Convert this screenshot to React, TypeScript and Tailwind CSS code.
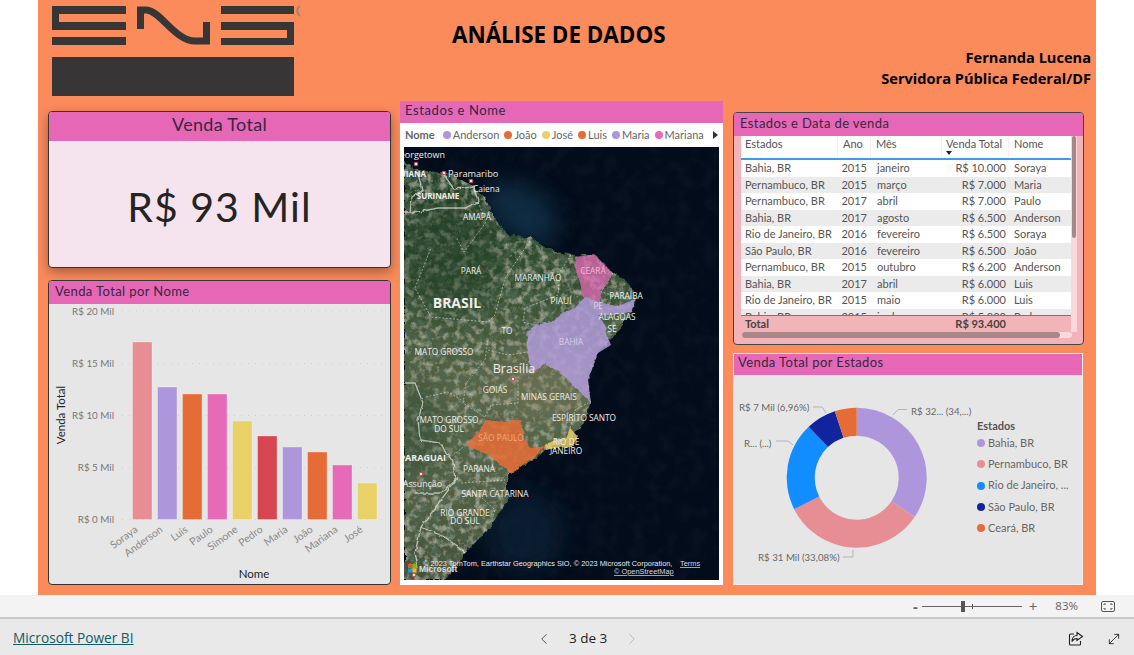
import { ChevronLeft, ChevronRight, MoveDiagonal } from "lucide-react";

const din = "[font-family:Lato,'Noto_Sans',sans-serif]";

const barData = [
  { name: "Soraya", top: 342, color: "#E78E95" },
  { name: "Anderson", top: 387, color: "#AE96DC" },
  { name: "Luis", top: 394, color: "#E66C37" },
  { name: "Paulo", top: 394, color: "#E66AB8" },
  { name: "Simone", top: 421, color: "#E9D168" },
  { name: "Pedro", top: 436, color: "#D64550" },
  { name: "Maria", top: 447, color: "#AE96DC" },
  { name: "João", top: 452, color: "#E66C37" },
  { name: "Mariana", top: 465, color: "#E66AB8" },
  { name: "José", top: 483, color: "#E9D168" },
];

const axisTicks = [
  { label: "R$ 20 Mil", y: 311 },
  { label: "R$ 15 Mil", y: 363.5 },
  { label: "R$ 10 Mil", y: 415.5 },
  { label: "R$ 5 Mil", y: 467.5 },
  { label: "R$ 0 Mil", y: 519.5 },
];

const tableRows = [
  ["Bahia, BR", "2015", "janeiro", "R$ 10.000", "Soraya"],
  ["Pernambuco, BR", "2015", "março", "R$ 7.000", "Maria"],
  ["Pernambuco, BR", "2017", "abril", "R$ 7.000", "Paulo"],
  ["Bahia, BR", "2017", "agosto", "R$ 6.500", "Anderson"],
  ["Rio de Janeiro, BR", "2016", "fevereiro", "R$ 6.500", "Soraya"],
  ["São Paulo, BR", "2016", "fevereiro", "R$ 6.500", "João"],
  ["Pernambuco, BR", "2015", "outubro", "R$ 6.200", "Anderson"],
  ["Bahia, BR", "2017", "abril", "R$ 6.000", "Luis"],
  ["Rio de Janeiro, BR", "2015", "maio", "R$ 6.000", "Luis"],
  ["Bahia, BR", "2015", "junho", "R$ 5.000", "Pedro"],
];

const slices = [
  { name: "Bahia, BR", pct: 34.5, color: "#AE96DC" },
  { name: "Pernambuco, BR", pct: 33.08, color: "#E78E95" },
  { name: "Rio de Janeiro, ...", pct: 20.4, color: "#118DFF" },
  { name: "São Paulo, BR", pct: 6.96, color: "#12239E" },
  { name: "Ceará, BR", pct: 5.06, color: "#E66C37" },
];

const mapLegend = [
  { name: "Anderson", color: "#AE96DC" },
  { name: "João", color: "#E66C37" },
  { name: "José", color: "#E9D168" },
  { name: "Luis", color: "#E66C37" },
  { name: "Maria", color: "#AE96DC" },
  { name: "Mariana", color: "#E66AB8" },
];

// label, x, y, size, anchor, weight
const mapLabels: [string, number, number, number, string?, number?][] = [
  ["Georgetown", 41, 11, 9, "end"],
  ["GUIANA", 22, 30, 8, "end", 700],
  ["Paramaribo", 44, 30, 9.2, "start"],
  ["Caiena", 69, 45, 8.4, "start"],
  ["SURINAME", 34, 52, 8, "middle", 700],
  ["AMAPÁ", 73, 73, 8.3],
  ["PARÁ", 67, 127, 8.3],
  ["MARANHÃO", 134, 134, 8.3],
  ["PIAUÍ", 157, 157, 8.3],
  ["BRASIL", 53, 161, 14, "middle", 700],
  ["TO", 103, 187, 8.3],
  ["PARAÍBA", 222, 152, 8.3],
  ["ALAGOAS", 213, 173, 8.3],
  ["SE", 208, 185, 8.3],
  ["MATO GROSSO", 40, 208, 8.3],
  ["Brasília", 110, 226, 12.5],
  ["GOIÁS", 91, 246, 8.3],
  ["MINAS GERAIS", 145, 253, 8.3],
  ["MATO GROSSO", 45, 276, 8.3],
  ["DO SUL", 45, 285, 8.3],
  ["ESPÍRITO SANTO", 180, 274, 8.3],
  ["RIO DE", 162, 298, 8.3],
  ["JANEIRO", 162, 307, 8.3],
  ["PARAGUAI", 42, 314, 9, "end", 700],
  ["PARANÁ", 75, 325, 8.3],
  ["Assunção", 38, 340, 8.8, "end"],
  ["SANTA CATARINA", 91, 350, 8.3],
  ["RIO GRANDE", 61, 369, 8.3],
  ["DO SUL", 61, 377, 8.3],
];

const tintedLabels: [string, number, number, string][] = [
  ["CEARÁ", 189, 127, "#f3b6d8"],
  ["PE", 194, 162, "#ddd0f0"],
  ["BAHIA", 167, 198, "#d9cfee"],
  ["SÃO PAULO", 97, 294, "#f3a57f"],
];

const stateLines = [
  "126,94 101,131 91,168 84,175 27,170 11,141 27,101",
  "167,108 156,125 154,148 121,161 119,175 131,178",
  "84,193 81,213 62,236 59,256 81,270",
  "84,203 104,208 124,205",
  "114,233 114,256 87,258 81,270",
  "22,250 44,245 61,255",
  "52,306 62,298",
  "57,336 101,333",
  "57,346 77,350 91,363 89,370",
  "166,281 171,263 184,256",
  "74,55 82,75 60,105 52,90",
  "209,126 197,145 215,150",
];

const borderLines = [
  "0,65 14,65 34,61 61,61 74,55",
  "0,236 11,236 19,256 14,273 16,293 36,296 49,315 51,333 37,346 11,346",
  "54,330 17,380 11,406 14,420",
  "17,380 41,390 61,406",
  "14,26 18,44 8,50 6,65",
  "40,28 50,42 70,40 74,55",
];

const pins = [
  [12, 17],
  [40, 26],
  [67, 34],
  [109, 232],
  [17, 327],
  [10, 428],
];

const landPoints =
  "0,13 14,23 44,26 66,38 81,51 91,71 104,88 127,91 151,105 171,108 191,108 209,126 227,138 232,151 227,168 211,188 206,193 194,206 184,233 186,256 181,276 167,290 141,303 134,310 107,326 102,340 104,353 84,383 61,406 47,426 40,433 0,433";

function arcPath(start: number, end: number) {
  const cx = 856.7;
  const cy = 477.7;
  const ro = 70;
  const ri = 42;
  const pt = (r: number, a: number) => {
    const t = (a / 100) * Math.PI * 2;
    return `${(cx + r * Math.sin(t)).toFixed(2)} ${(cy - r * Math.cos(t)).toFixed(2)}`;
  };
  const large = end - start > 50 ? 1 : 0;
  return `M${pt(ro, start)} A${ro} ${ro} 0 ${large} 1 ${pt(ro, end)} L${pt(ri, end)} A${ri} ${ri} 0 ${large} 0 ${pt(ri, start)} Z`;
}

function Logo() {
  return (
    <svg width="252" height="92" viewBox="52 5 252 92" className="shrink-0">
      <g fill="#373535">
        <path d="M52 6h74v8H59v8h67v8H52z" />
        <rect x="52" y="37" width="74" height="8" />
        <path d="M221 6h73v8h-73zM221 22h73v23h-73v-7h66v-8h-66z" />
        <rect x="52" y="57" width="242" height="39" />
      </g>
      <path
        d="M140.5 29V10H146C160 10 175 41 195 41H206.5V22"
        fill="none"
        stroke="#373535"
        strokeWidth="7"
      />
      <path d="M300 6a6 6 0 0 0 0 10" fill="none" stroke="#a88070" strokeWidth="2" />
    </svg>
  );
}

function BarChart() {
  return (
    <svg width="341" height="280" viewBox="49 304 341 280" className="block">
      {axisTicks.map((t) => (
        <g key={t.label}>
          <line x1="122" x2="388" y1={t.y} y2={t.y} stroke="#cfcfcf" strokeDasharray="1 6" />
          <text x="114" y={t.y + 3.5} textAnchor="end" fontSize="9.8" fill="#777">
            {t.label}
          </text>
        </g>
      ))}
      {barData.map((b, i) => {
        const x = 132.5 + i * 25;
        return (
          <g key={b.name}>
            <rect x={x} y={b.top} width="19.5" height={519.5 - b.top} fill={b.color} />
            <rect x={x} y={b.top} width="19.5" height={519.5 - b.top} fill="none" stroke="#fff" strokeOpacity="0.3" />
            <text
              x={x + 6}
              y={531}
              textAnchor="end"
              fontSize="10.5"
              fill="#8a8a8a"
              transform={`rotate(-36 ${x + 6} 531)`}
            >
              {b.name}
            </text>
          </g>
        );
      })}
      <text x="65" y="415" textAnchor="middle" fontSize="11.5" fill="#252423" transform="rotate(-90 65 415)">
        Venda Total
      </text>
      <text x="254" y="578" textAnchor="middle" fontSize="11.5" fill="#252423">
        Nome
      </text>
    </svg>
  );
}

function MapView() {
  return (
    <svg width="316" height="433" viewBox="0 0 316 433" className="block">
      <defs>
        <filter id="terrain" x="-2%" y="-2%" width="104%" height="104%">
          <feTurbulence type="fractalNoise" baseFrequency="0.13" numOctaves="3" seed="11" result="edge" />
          <feDisplacementMap in="SourceGraphic" in2="edge" scale="6" xChannelSelector="R" yChannelSelector="G" result="shape" />
          <feTurbulence type="fractalNoise" baseFrequency="0.14" numOctaves="4" seed="7" result="n" />
          <feColorMatrix
            in="n"
            type="matrix"
            values="0 0 0 0 0.08  0 0 0 0 0.14  0 0 0 0 0.09  2.6 0 0 0 -1.05"
            result="dark"
          />
          <feColorMatrix
            in="n"
            type="matrix"
            values="0 0 0 0 0.58  0 0 0 0 0.6  0 0 0 0 0.46  0 1.5 0 0 -0.72"
            result="light"
          />
          <feMerge result="m">
            <feMergeNode in="shape" />
            <feMergeNode in="dark" />
            <feMergeNode in="light" />
          </feMerge>
          <feComposite in="m" in2="shape" operator="in" />
        </filter>
        <filter id="rough" x="-5%" y="-5%" width="110%" height="110%">
          <feTurbulence type="fractalNoise" baseFrequency="0.18" numOctaves="2" seed="4" />
          <feDisplacementMap in="SourceGraphic" scale="3.5" xChannelSelector="R" yChannelSelector="G" />
        </filter>
        <filter id="soft" x="-40%" y="-40%" width="180%" height="180%">
          <feGaussianBlur stdDeviation="11" />
        </filter>
        <filter id="waves" x="0" y="0" width="100%" height="100%">
          <feTurbulence type="fractalNoise" baseFrequency="0.07" numOctaves="3" seed="3" />
          <feColorMatrix type="matrix" values="0 0 0 0 0.08  0 0 0 0 0.18  0 0 0 0 0.26  0.9 0 0 0 -0.38" />
        </filter>
        <linearGradient id="land" x1="0" y1="0" x2="0" y2="1">
          <stop offset="0" stopColor="#22402a" />
          <stop offset="0.3" stopColor="#35502f" />
          <stop offset="0.55" stopColor="#5c6645" />
          <stop offset="0.8" stopColor="#525f42" />
          <stop offset="1" stopColor="#434f38" />
        </linearGradient>
        <clipPath id="landClip">
          <polygon points={landPoints} />
        </clipPath>
      </defs>
      <rect width="316" height="433" fill="#030c1a" />
      <rect width="316" height="433" filter="url(#waves)" opacity="0.18" />
      <ellipse cx="118" cy="66" rx="40" ry="26" fill="#15405c" filter="url(#soft)" opacity="0.6" transform="rotate(35 118 66)" />
      <ellipse cx="120" cy="385" rx="40" ry="40" fill="#10283c" filter="url(#soft)" opacity="0.6" />
      <polygon points={landPoints} fill="url(#land)" filter="url(#terrain)" />
      <g clipPath="url(#landClip)">
        <ellipse cx="45" cy="110" rx="50" ry="60" fill="#1b3a24" filter="url(#soft)" opacity="0.5" />
        <ellipse cx="15" cy="280" rx="25" ry="50" fill="#2b4a30" filter="url(#soft)" opacity="0.5" />
        <ellipse cx="140" cy="235" rx="50" ry="40" fill="#807d60" filter="url(#soft)" opacity="0.35" />
      </g>
      <g fill="none" stroke="#e8e8e0" strokeOpacity="0.7" filter="url(#rough)">
        {borderLines.map((p) => (
          <polyline key={p} points={p} strokeWidth="1.3" />
        ))}
      </g>
      <g fill="none" stroke="#f2f2ea" strokeOpacity="0.65" strokeDasharray="2 1.6">
        {stateLines.map((p) => (
          <polyline key={p} points={p} strokeWidth="0.8" />
        ))}
      </g>
      <g filter="url(#rough)">
        <polygon
          points="171,110 191,108 209,126 197,145 196,155 179,150 176,135 172,125"
          fill="#E66AB8"
          fillOpacity="0.72"
        />
        <polygon
          points="181,150 196,155 211,160 232,152 227,165 207,168 194,168 201,178 202,186 207,198 194,206 184,233 187,256 174,243 161,230 141,216 127,226 124,206 124,193 122,188 131,178 147,175 161,165 171,161"
          fill="#B39CDE"
          fillOpacity="0.82"
        />
        <polygon
          points="62,298 74,286 82,273 101,275 116,273 121,293 127,301 142,299 131,310 107,326 97,318 84,308"
          fill="#E66C37"
          fillOpacity="0.85"
        />
        <polygon
          points="141,298 151,293 162,291 166,281 174,290 167,300 151,301 142,303"
          fill="#E9D168"
          fillOpacity="0.85"
        />
      </g>
      {pins.map(([x, y]) => (
        <circle key={`${x}-${y}`} cx={x} cy={y} r="1.8" fill="#f4e6e6" stroke="#c9485b" strokeWidth="1.1" />
      ))}
      <g fill="#eeeeea" className="[font-family:'Open_Sans',sans-serif]">
        {mapLabels.map(([text, x, y, size, anchor, weight]) => (
          <text
            key={`${text}-${y}`}
            x={x}
            y={y}
            fontSize={size}
            textAnchor={anchor ?? "middle"}
            fontWeight={weight ?? 500}
          >
            {text}
          </text>
        ))}
        {tintedLabels.map(([text, x, y, color]) => (
          <text key={text} x={x} y={y} fontSize="8.3" textAnchor="middle" fill={color}>
            {text}
          </text>
        ))}
      </g>
      <g className="[font-family:'Liberation_Sans',sans-serif]" fontSize="7.4" fill="#e4e8ee">
        <text x="19" y="419">© 2023 TomTom, Earthstar Geographics SIO, © 2023 Microsoft Corporation,</text>
        <text x="276" y="419" textDecoration="underline" fill="#cfd6f0">Terms</text>
        <text x="210" y="427" textDecoration="underline" fill="#cfd6f0">© OpenStreetMap</text>
        <text x="15" y="425" fontSize="8.5" fontWeight="700" fill="#dcdcdc">Microsoft</text>
      </g>
      <g>
        <rect x="4" y="417" width="4" height="4" fill="#f25022" />
        <rect x="8.5" y="417" width="4" height="4" fill="#7fba00" />
        <rect x="4" y="421.5" width="4" height="4" fill="#00a4ef" />
        <rect x="8.5" y="421.5" width="4" height="4" fill="#ffb900" />
      </g>
    </svg>
  );
}

function DonutChart() {
  let acc = 0;
  return (
    <svg width="240" height="208" viewBox="734 375 240 208" className="block shrink-0">
      {slices.map((s) => {
        const d = arcPath(acc, acc + s.pct);
        acc += s.pct;
        return <path key={s.name} d={d} fill={s.color} />;
      })}
      <g fill="none" stroke="#b3b3b3">
        <polyline points="813,407 822,407 826,413" />
        <polyline points="776,441 788,441 793,445" />
        <polyline points="893,415 898,409.5 907,409.5" />
        <polyline points="843,557 853,557 853,550" />
      </g>
      <g fontSize="9.7" fill="#666">
        <text x="739" y="411">R$ 7 Mil (6,96%)</text>
        <text x="744" y="447">R... (...)</text>
        <text x="911" y="415">R$ 32... (34,...)</text>
        <text x="758" y="561">R$ 31 Mil (33,08%)</text>
      </g>
    </svg>
  );
}

function PanelTitle({ children }: { children: React.ReactNode }) {
  return (
    <div className="h-[23px] bg-[#E667B6] px-[6px] text-[13px] leading-[20px] tracking-[0.4px] text-[#35283f]">
      {children}
    </div>
  );
}

export default function App() {
  return (
    <div className={`flex h-[655px] w-[1134px] flex-col overflow-hidden bg-white ${din}`}>
      <main className="mx-[38px] flex h-[595px] flex-col bg-[#FC8B5C]">
        {/* Header */}
        <header className="flex h-[101px] pl-[14px] pt-[5px] [font-family:'Open_Sans',sans-serif]">
          <Logo />
          <h1 className="ml-[148px] mt-[15px] h-fit text-[22.4px] font-bold leading-[30px] text-black">
            ANÁLISE DE DADOS
          </h1>
          <div className="ml-auto mr-[5px] mt-[42px] text-right text-[14.6px] font-bold leading-[21px] text-black">
            <p>Fernanda Lucena</p>
            <p>Servidora Pública Federal/DF</p>
          </div>
        </header>

        <div className="flex pl-[10px]">
          {/* Left column */}
          <div className="mt-[10px] flex w-[343px] flex-col gap-[12px]">
            <section className="h-[157px] overflow-hidden rounded-[4px] border border-[#333] bg-[#F5E3ED] shadow-[0_4px_12px_rgba(0,0,0,0.35)]">
              <div className="h-[29px] bg-[#E667B6] text-center text-[18px] leading-[25px] tracking-[0.3px] text-[#35283f]">
                Venda Total
              </div>
              <div className="flex h-[126px] items-center justify-center pt-[5px] text-[41px] tracking-[1px] text-[#252423]">
                R$ 93 Mil
              </div>
            </section>
            <section className="h-[305px] overflow-hidden rounded-[4px] border border-[#333] bg-[#E6E6E6]">
              <PanelTitle>Venda Total por Nome</PanelTitle>
              <BarChart />
            </section>
          </div>

          {/* Map column */}
          <section className="ml-[9px] h-[484px] w-[323px] bg-white">
            <div className="h-[22px] bg-[#E667B6] px-[5px] text-[13px] leading-[19px] tracking-[0.6px] text-[#35283f]">
              Estados e Nome
            </div>
            <div className="flex h-[24px] items-center pl-[5px] pr-[5px] text-[11px] text-[#666]">
              <span className="mr-[8px] font-bold">Nome</span>
              {mapLegend.map((l) => (
                <span key={l.name} className="mr-[5px] flex items-center gap-[2px]">
                  <span className="h-[8px] w-[8px] rounded-full" style={{ backgroundColor: l.color }} />
                  {l.name}
                </span>
              ))}
              <span className="ml-auto h-0 w-0 border-y-[4px] border-l-[5px] border-y-transparent border-l-[#333]" />
            </div>
            <div className="mx-[4px] h-[433px] overflow-hidden">
              <MapView />
            </div>
          </section>

          {/* Right column */}
          <div className="ml-[10px] mt-[11px] flex w-[351px] flex-col gap-[8px]">
            <section className="h-[233px] overflow-hidden rounded-[4px] border border-[#444] bg-[#F2B4B8]">
              <PanelTitle>Estados e Data de venda</PanelTitle>
              <div className="flex h-[179px] pl-[7px]">
                <div className="h-full w-[330px] overflow-hidden bg-white text-[11px] text-[#555]">
                  <div className="grid h-[22px] grid-cols-[97px_33px_71px_67px_62px] leading-[15px]">
                    <span className="border-r border-[#fbeeee] pl-[4px]">Estados</span>
                    <span className="border-r border-[#fbeeee] pl-[5px]">Ano</span>
                    <span className="border-r border-[#fbeeee] pl-[5px]">Mês</span>
                    <span className="relative border-r border-[#fbeeee] pl-[4px]">
                      Venda Total
                      <span className="absolute left-[4px] top-[15px] h-0 w-0 border-x-[3.5px] border-t-[4px] border-x-transparent border-t-[#222]" />
                    </span>
                    <span className="pl-[5px]">Nome</span>
                  </div>
                  <div className="h-[2px] bg-[#3F9AEE]" />
                  <div className="h-[155px] overflow-hidden">
                    {tableRows.map((r, i) => (
                      <div
                        key={`${r[0]}-${r[2]}-${r[4]}`}
                        className={`grid h-[16.5px] grid-cols-[97px_33px_71px_67px_62px] leading-[16.5px] ${
                          i % 2 === 1 ? "bg-[#EBEBEB]" : "bg-white"
                        }`}
                      >
                        <span className="whitespace-nowrap pl-[4px]">{r[0]}</span>
                        <span className="pr-[4px] text-right">{r[1]}</span>
                        <span className="pl-[6px]">{r[2]}</span>
                        <span className="pr-[3px] text-right">{r[3]}</span>
                        <span className="pl-[5px]">{r[4]}</span>
                      </div>
                    ))}
                  </div>
                </div>
                <div className="h-[196px] w-[6px] bg-[#F8DADB]">
                  <div className="ml-[1px] h-[102px] w-[4px] rounded-full bg-[#A98787]" />
                </div>
              </div>
              <div className="ml-[7px] h-[1px] w-[330px] bg-[#1E8CF0]" />
              <div className="ml-[7px] flex h-[16px] w-[330px] text-[11px] font-bold leading-[16px] text-[#444]">
                <span className="pl-[4px]">Total</span>
                <span className="ml-auto mr-[65px]">R$ 93.400</span>
              </div>
              <div className="ml-[8px] h-[6px] w-[330px] rounded-full bg-[#F8DADB]">
                <div className="h-[6px] w-[318px] rounded-full bg-[#A98787]" />
              </div>
            </section>

            <section className="h-[232px] w-[350px] overflow-hidden border border-[#eeeeee] bg-[#E6E6E6]">
              <div className="h-[21px] bg-[#E667B6] px-[4px] text-[13px] leading-[17px] tracking-[0.4px] text-[#35283f]">
                Venda Total por Estados
              </div>
              <div className="flex">
                <DonutChart />
                <div className="ml-[3px] mt-[42px] text-[11px] text-[#666]">
                  <p className="h-[18px] font-bold leading-[18px] text-[#555]">Estados</p>
                  <ul className="flex flex-col gap-[4.6px]">
                    {slices.map((s) => (
                      <li key={s.name} className="flex h-[16.6px] items-center gap-[3px] whitespace-nowrap">
                        <span className="h-[8px] w-[8px] rounded-full" style={{ backgroundColor: s.color }} />
                        {s.name}
                      </li>
                    ))}
                  </ul>
                </div>
              </div>
            </section>
          </div>
        </div>
      </main>

      {/* Zoom bar */}
      <div className="flex h-[24px] items-center justify-end border-b-2 border-[#c8c8c8] bg-[#F3F3F3] text-[#666] [font-family:'Open_Sans',sans-serif]">
        <span className="text-[15px] font-bold leading-none">-</span>
        <div className="relative ml-[4px] h-[1px] w-[100px] bg-[#666]">
          <span className="absolute left-[39px] top-[-5px] h-[11px] w-[4px] bg-[#555]" />
          <span className="absolute left-[50px] top-[-2px] h-[5px] w-[1px] bg-[#555]" />
        </div>
        <span className="ml-[7px] text-[15px] leading-none">+</span>
        <span className="ml-[18px] text-[11.5px]">83%</span>
        <svg width="14" height="11" viewBox="0 0 14 11" className="ml-[23px] mr-[19px]" fill="none" stroke="#555">
          <rect x="0.5" y="0.5" width="13" height="10" rx="1.5" />
          <path d="M3 4V3h2M9 3h2v1M3 7v1h2M11 7v1H9" />
        </svg>
      </div>

      {/* Footer */}
      <footer className="relative flex flex-1 items-center justify-between bg-[#E9E9E9] pl-[13px] pr-[12px] pt-[3px] [font-family:'Open_Sans',sans-serif]">
        <a href="#" className="text-[13.7px] text-[#0F5C63] underline">
          Microsoft Power BI
        </a>
        <div className="absolute left-[535px] flex items-center text-[13.5px] text-[#222]">
          <ChevronLeft size={18} strokeWidth={1.3} className="text-[#555]" />
          <span className="ml-[16px]">3 de 3</span>
          <ChevronRight size={18} strokeWidth={1.3} className="ml-[16px] text-[#b5b5b5]" />
        </div>
        <div className="flex items-center gap-[22px]">
          <svg width="16" height="16" viewBox="0 0 16 16" fill="none" stroke="#222" strokeWidth="1.1">
            <path d="M6 3H2.500A1 1 0 0 0 1.500 4v9a1 1 0 0 0 1 1h9a1 1 0 0 0 1-1v-3" />
            <path d="M9 1.500l5.500 4-5.500 4V7.500c-2.500 0-4 1-5 3 0-3.500 2-6 5-6z" />
          </svg>
          <MoveDiagonal size={16} strokeWidth={1.2} className="text-[#111]" />
        </div>
      </footer>
    </div>
  );
}
